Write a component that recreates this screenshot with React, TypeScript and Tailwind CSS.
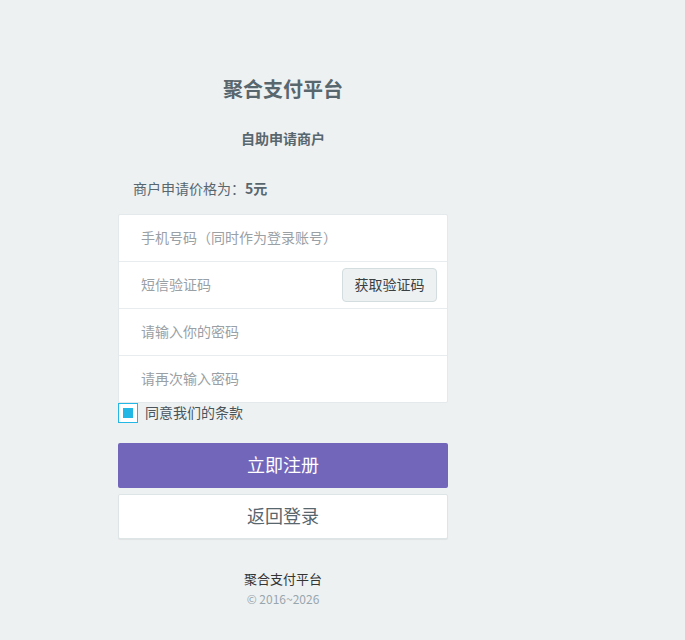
import React from "react";

export default function App() {
  const font = { fontFamily: '"Noto Sans CJK SC", "Noto Sans", sans-serif' };
  return (
    <div className="min-h-[640px] w-full bg-[#eef1f2] text-[#58666e]" style={font}>
      <div className="ml-[118px] w-[330px] pt-[75px]">
        <div className="text-center text-[20px] font-bold leading-[28px] text-[#58666e]">聚合支付平台</div>
        <div className="mt-[25px] text-center text-[14px] font-bold leading-[20px]">自助申请商户</div>
        <div className="mt-[30px] pl-[15px] text-[14px] leading-[20px]">
          商户申请价格为：<span className="font-bold">5元</span>
        </div>
        <div className="mt-[16px] rounded-[2px] border border-[#e4e9eb] bg-white">
          <div className="flex h-[47px] items-center border-b border-[#e8ecee] pb-[2px] pl-[22px] text-[14px] text-[#9aa0a4]">
            手机号码（同时作为登录账号）
          </div>
          <div className="flex h-[47px] items-center justify-between border-b border-[#e8ecee] pl-[22px] pr-[10px] text-[14px] text-[#9aa0a4]">
            <span className="pb-[2px]">短信验证码</span>
            <div className="flex h-[34px] w-[95px] items-center justify-center rounded-[4px] border border-[#d3dcdf] bg-[#edf1f2] pb-[1px] text-[14px] text-[#3a3f42]">
              获取验证码
            </div>
          </div>
          <div className="flex h-[47px] items-center border-b border-[#e8ecee] pb-[2px] pl-[22px] text-[14px] text-[#9aa0a4]">
            请输入你的密码
          </div>
          <div className="flex h-[46px] items-center pb-[2px] pl-[22px] text-[14px] text-[#9aa0a4]">
            请再次输入密码
          </div>
        </div>
        <div className="flex h-[20px] items-center gap-[7px]">
          <div className="flex h-[20px] w-[20px] items-center justify-center border border-[#23b7e5] bg-white">
            <div className="h-[10px] w-[10px] bg-[#23b7e5]" />
          </div>
          <span className="pb-[2px] text-[14px] leading-[20px] text-[#4a555b]">同意我们的条款</span>
        </div>
        <div className="mt-[20px] flex h-[45px] items-center justify-center rounded-[2px] bg-[#7266ba] pb-[2px] text-[18px] text-white">
          立即注册
        </div>
        <div className="mt-[6px] flex h-[45px] items-center justify-center rounded-[2px] border border-[#dee5e7] bg-white pb-[2px] text-[18px] text-[#58666e] shadow-[0_1px_1px_rgba(0,0,0,0.06)]">
          返回登录
        </div>
        <div className="mt-[30px] text-center text-[13px] leading-[20px] text-[#333]">聚合支付平台</div>
        <div className="mt-[1px] text-center text-[12px] leading-[18px] text-[#98a6ad]">© 2016~2026</div>
      </div>
    </div>
  );
}
